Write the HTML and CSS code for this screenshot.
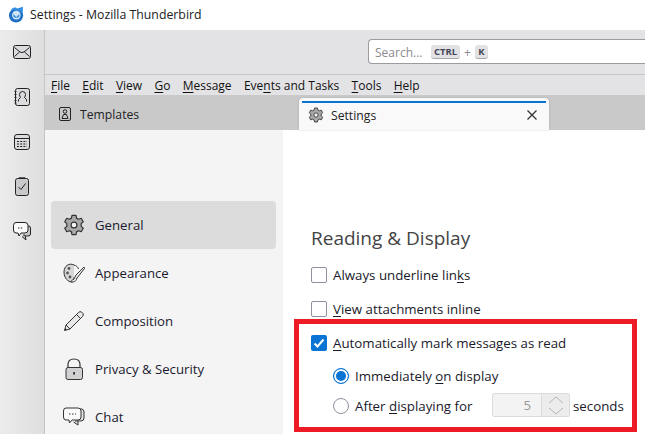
FILE: index.html
```html
<!DOCTYPE html>
<html lang="en">
<head>
    <meta charset="UTF-8">
    <title>Settings - Mozilla Thunderbird</title>
    <link rel="stylesheet" href="styles.css">
</head>
<body>
    <header class="title-bar">
        <svg class="app-logo" viewBox="0 0 18 18" width="17" height="17">
            <circle cx="8.5" cy="10" r="7.5" fill="#1f6fc4"/>
            <path d="M3 5 C4 2 7 1 9 2 C8 2.5 8 3 8.5 3.4 C11 2.2 14 1.6 15.5 0.6 C16 3 16 6 15 8 C13 5 8 4 3 5Z" fill="#2f8fe0"/>
            <circle cx="8.8" cy="9.6" r="4.6" fill="#cfe4f7"/>
            <path d="M5.6 8.6 L8.8 11.6 L12 8.6 L12 11 C11 13 6.6 13 5.6 11Z" fill="#3d8fdb"/>
        </svg>
        <span>Settings - Mozilla Thunderbird</span>
    </header>

    <div class="window">
        <aside class="spaces">
            <svg class="space-icon mail" viewBox="0 0 18 14" width="18" height="14">
                <rect x="0.5" y="0.5" width="17" height="13" rx="2" fill="#dcdcde" stroke="#222"/>
                <path d="M1.5 2.5 L7 7 Q9 8 11 7 L16.5 2.5 M1.5 11.5 L6.5 7 M16.5 11.5 L11.5 7" fill="none" stroke="#222"/>
            </svg>
            <svg class="space-icon book" viewBox="0 0 16 18" width="16" height="18">
                <rect x="1.5" y="0.5" width="14" height="17" rx="2" fill="#dcdcde" stroke="#222"/>
                <path d="M4.5 13.5 V11.5 L6.5 9.5 Q5.5 8 5.5 6.5 Q5.5 3.5 8.5 3.5 Q11.5 3.5 11.5 6.5 Q11.5 8 10.5 9.5 L12.5 11.500 V13.5 M0.5 3.5 H2.5 M0.5 6.5 H2.5 M0.5 9.5 H2.5 M0.5 12.5 H2.5 M0.5 15 H2.5" fill="none" stroke="#222"/>
            </svg>
            <svg class="space-icon calendar" viewBox="0 0 16 16" width="16" height="16">
                <rect x="0.5" y="0.5" width="15" height="15" rx="2.5" fill="#dcdcde" stroke="#222"/>
                <path d="M0.5 4.5 H15.5" stroke="#222"/>
                <path d="M3 7.5 H13 M3 10 H13 M3 12.5 H13" stroke="#222" stroke-dasharray="2 1.2"/>
            </svg>
            <svg class="space-icon tasks" viewBox="0 0 14 19" width="14" height="19">
                <rect x="0.5" y="1.5" width="13" height="17" rx="2" fill="#c9c9cb" stroke="#222"/>
                <path d="M4 2 V0.8 H10 V2" fill="none" stroke="#222"/>
                <path d="M3.5 10 L6 12.5 L10.5 6.5" fill="none" stroke="#222"/>
            </svg>
            <svg class="space-icon chat" viewBox="0 0 18 19" width="18" height="19">
                <path d="M10 13 H12 L13 18 L9 14.5" fill="#c9c9cb" stroke="#222"/>
                <path d="M13 4 H15.5 Q17.5 4 17.5 6 V12 Q17.5 14 15 14 H12" fill="#c9c9cb" stroke="#222"/>
                <path d="M3 0.5 H12 Q15 0.5 15 3.5 V8 Q15 11 12 11 H8 L6 14 L5 11 H3 Q0.5 11 0.5 8 V3.5 Q0.5 0.5 3 0.5Z" fill="#fafafa" stroke="#222"/>
                <path d="M5 6 H10.5" stroke="#222" stroke-dasharray="1.4 1.4"/>
            </svg>
        </aside>

        <div class="main">
            <div class="toolbar">
                <div class="search-box">
                    <span class="search-hint">Search...</span>
                    <kbd class="key key-ctrl">CTRL</kbd>
                    <span class="key-plus">+</span>
                    <kbd class="key key-k">K</kbd>
                </div>
            </div>

            <nav class="menu-bar">
                <span><u>F</u>ile</span>
                <span><u>E</u>dit</span>
                <span><u>V</u>iew</span>
                <span><u>G</u>o</span>
                <span><u>M</u>essage</span>
                <span>Eve<u>n</u>ts and Tasks</span>
                <span><u>T</u>ools</span>
                <span><u>H</u>elp</span>
            </nav>

            <div class="tab-bar">
                <div class="tab">
                    <svg viewBox="0 0 12 14" width="12" height="14">
                        <rect x="0.5" y="0.5" width="11" height="13" rx="1.5" fill="none" stroke="#222"/>
                        <circle cx="6" cy="4.5" r="1.8" fill="none" stroke="#222"/>
                        <path d="M3 11.5 L4.5 7.5 H7.5 L9 11.5Z" fill="none" stroke="#222"/>
                    </svg>
                    <span>Templates</span>
                </div>
                <div class="tab tab-active">
                    <svg viewBox="0 0 24 24" width="16" height="16">
                        <use href="#gear"/>
                    </svg>
                    <span>Settings</span>
                    <svg class="tab-close" viewBox="0 0 10 10" width="10" height="10">
                        <path d="M0.5 0.5 L9.5 9.5 M9.5 0.5 L0.5 9.5" stroke="#333" stroke-width="1.3"/>
                    </svg>
                </div>
            </div>

            <div class="content">
                <div class="side-nav">
                    <a class="nav-item selected">
                        <svg viewBox="0 0 24 24" width="22" height="22"><use href="#gear"/></svg>
                        General
                    </a>
                    <a class="nav-item">
                        <svg viewBox="0 0 22 22" width="22" height="22">
                            <path d="M11 3 C6 0.5 1 4 1 10 C1 16 5 20 9 20 C11 20 10.5 17 11 15.5" fill="#d6d6d8" stroke="#333"/>
                            <path d="M11 3 C13 3.5 15 5 15.5 7" fill="none" stroke="#333"/>
                            <circle cx="6" cy="6.5" r="1.4" fill="#555"/>
                            <circle cx="4.5" cy="11" r="1.4" fill="#555"/>
                            <circle cx="7" cy="15" r="1.4" fill="#555"/>
                            <path d="M21 5 L13 13 L11 17 C9 18 8.5 19 7.5 19.5 C10 20.5 13 20 14 16 L21.5 6.5Z" fill="#eee" stroke="#333"/>
                        </svg>
                        Appearance
                    </a>
                    <a class="nav-item">
                        <svg viewBox="0 0 22 22" width="22" height="22">
                            <path d="M15.5 2.5 Q17 1 18.5 2 L20 3.5 Q21 5 19.5 6.5 L7 19 L1.5 20.5 L3 15Z" fill="#e8e8e8" stroke="#333"/>
                            <path d="M13.5 4.5 L17.5 8.5 M3 15 L7 19" fill="none" stroke="#333"/>
                            <path d="M1.5 20.5 L2.2 18 L4 19.8Z" fill="#333"/>
                        </svg>
                        Composition
                    </a>
                    <a class="nav-item">
                        <svg viewBox="0 0 22 22" width="22" height="22">
                            <path d="M5 10 V6.5 Q5 1 11 1 Q17 1 17 6.5 V10" fill="none" stroke="#333" stroke-width="1.2"/>
                            <rect x="3" y="9.5" width="16.5" height="12" rx="2" fill="#d0d0d2" stroke="#333"/>
                            <rect x="10.2" y="14" width="1.8" height="2.6" fill="#333"/>
                        </svg>
                        Privacy &amp; Security
                    </a>
                    <a class="nav-item">
                        <svg viewBox="0 0 22 20" width="22" height="20">
                            <path d="M12 14 H15 L15 18 L10.5 15" fill="#e0e0e2" stroke="#333"/>
                            <path d="M17 2 H19 Q21 2.5 21 5 V11 Q21 14 18 14 H15" fill="#e0e0e2" stroke="#333"/>
                            <path d="M3 1 H15 Q18 1 18 4 V10 Q18 13 15 13 H9 L6.5 16 L6 13 H3 Q0.5 13 0.5 10 V4 Q0.5 1 3 1Z" fill="#fafafa" stroke="#333"/>
                            <path d="M6 7 H13" stroke="#333" stroke-dasharray="1.5 1.5"/>
                        </svg>
                        Chat
                    </a>
                </div>

                <section class="pane">
                    <h2>Reading &amp; Display</h2>
                    <label class="row"><span class="check"></span><span>Always underline lin<u>k</u>s</span></label>
                    <label class="row"><span class="check"></span><span><u>V</u>iew attachments inline</span></label>
                    <label class="row row-last"><span class="check checked">
                        <svg viewBox="0 0 16 16" width="16" height="16"><path d="M3.5 8.5 L6.5 11.5 L12.5 4.5" fill="none" stroke="#fff" stroke-width="2"/></svg>
                    </span><span><u>A</u>utomatically mark messages as read</span></label>
                    <div class="radio-group">
                        <label class="radio-row"><span class="radio radio-on"></span><span>Immediately <u>o</u>n display</span></label>
                        <label class="radio-row"><span class="radio"></span><span class="after-label">After <u>d</u>isplaying for</span>
                            <span class="spinner">
                                <span class="spin-value">5</span>
                                <span class="spin-btns">
                                    <svg viewBox="0 0 16 8" width="16" height="8"><path d="M1 7 L8 1 L15 7" fill="none" stroke="#b5b5b5"/></svg>
                                    <svg viewBox="0 0 16 8" width="16" height="8"><path d="M1 1 L8 7 L15 1" fill="none" stroke="#b5b5b5"/></svg>
                                </span>
                            </span>
                            <span class="seconds">seconds</span>
                        </label>
                    </div>
                </section>
            </div>
        </div>
    </div>

    <div class="highlight-box"></div>

    <svg class="defs" width="0" height="0">
        <symbol id="gear" viewBox="0 0 24 24">
            <path d="M9.8 1.5 H14.2 L14.8 4.5 L17 5.7 L19.9 4.7 L22.1 8.5 L19.8 10.5 V13.5 L22.1 15.5 L19.9 19.3 L17 18.3 L14.8 19.5 L14.2 22.5 H9.8 L9.2 19.5 L7 18.3 L4.1 19.3 L1.9 15.5 L4.2 13.5 V10.5 L1.9 8.5 L4.1 4.7 L7 5.7 L9.2 4.5Z" fill="#a8a8aa" stroke="#333" stroke-width="1.3" stroke-linejoin="round"/>
            <circle cx="12" cy="12" r="3.2" fill="#f4f4f4" stroke="#333" stroke-width="1.3"/>
        </symbol>
    </svg>
</body>
</html>
```

FILE: styles.css
```css
* {
    box-sizing: border-box;
}

html, body {
    margin: 0;
    height: 100%;
    overflow: hidden;
}

body {
    position: relative;
    font-family: "Open Sans", "Noto Sans", sans-serif;
    font-size: 13.2px;
    color: #1a1a2a;
    background: #fff;
}

u {
    text-underline-offset: 2px;
}

.defs {
    position: absolute;
}

/* title bar */
.title-bar {
    height: 30px;
    display: flex;
    align-items: center;
    gap: 5px;
    padding: 0 0 2px 8px;
    font-size: 12.3px;
    background: #fff;
    color: #222;
}

.window {
    display: flex;
    height: 404px;
}

/* left icon strip */
.spaces {
    width: 45px;
    flex: none;
    display: flex;
    flex-direction: column;
    align-items: center;
    padding-top: 15px;
    background: linear-gradient(90deg, #ececec, #dedede);
    border-right: 1px solid #c4c4c6;
}

.space-icon {
    display: block;
}

.mail { margin-bottom: 29px; }
.book { margin-bottom: 28px; }
.calendar { margin-bottom: 27px; }
.tasks { margin-bottom: 26px; }

.main {
    flex: 1;
    min-width: 0;
    display: flex;
    flex-direction: column;
}

/* search toolbar */
.toolbar {
    height: 45px;
    flex: none;
    display: flex;
    align-items: flex-start;
    padding: 9px 0 0 323px;
    background: #e3e3e5;
    border-bottom: 1px solid #c8c8ca;
}

.search-box {
    flex: 1;
    height: 25px;
    display: flex;
    align-items: center;
    padding: 1px 0 0 6px;
    font-size: 12px;
    background: #fff;
    border: 1px solid #9b9ba0;
    border-right: none;
    border-radius: 4px 0 0 4px;
    color: #8a8a90;
}

.search-hint {
    width: 56px;
}

.key {
    height: 14px;
    padding: 0 4px;
    font-family: "Open Sans", sans-serif;
    font-size: 9.5px;
    font-weight: 700;
    line-height: 13px;
    color: #45455a;
    background: #e2e2e4;
    border-bottom: 1px solid #a8a8ac;
    border-radius: 3px;
}

.key-ctrl {
    width: 29px;
    padding: 0;
    text-align: center;
}

.key-k {
    width: 13px;
    padding: 0;
    text-align: center;
}

.key-plus {
    width: 15px;
    text-align: center;
}

/* menu */
.menu-bar {
    height: 20px;
    flex: none;
    display: flex;
    align-items: center;
    gap: 12.3px;
    padding-left: 6px;
    font-size: 12px;
    background: #e3e3e5;
    color: #111;
}

/* tabs */
.tab-bar {
    height: 35px;
    flex: none;
    display: flex;
    align-items: flex-end;
    padding-left: 14px;
    font-size: 12.2px;
    background: #c9c9ca;
}

.tab {
    width: 240px;
    height: 32px;
    display: flex;
    align-items: center;
    gap: 9px;
    color: #222;
}

.tab-active {
    width: 250px;
    gap: 7px;
    padding: 2px 12px 0 9px;
    background: #f9f9fa;
    border-radius: 4px 4px 0 0;
    box-shadow: 0 0 2px rgba(0, 0, 0, 0.2);
    position: relative;
}

.tab-active::before {
    content: '';
    position: absolute;
    top: 3px;
    left: 3px;
    right: 3px;
    height: 2px;
    background: #0a74d4;
}

.tab-close {
    margin-left: auto;
}

/* settings page */
.content {
    flex: 1;
    display: flex;
    min-height: 0;
}

.side-nav {
    width: 238px;
    flex: none;
    padding: 71px 7px 0 6px;
    background: #f4f4f4;
}

.nav-item {
    height: 48px;
    display: flex;
    align-items: center;
    gap: 10px;
    padding-left: 12px;
    border-radius: 4px;
    color: #1a1a2e;
}

.nav-item.selected {
    background: #dcdcdc;
}

.nav-item svg {
    flex: none;
    width: 22px;
}

.pane {
    flex: 1;
    padding: 95px 0 0 28px;
    font-size: 13.3px;
    background: #fff;
}

.pane h2 {
    margin: 0 0 16px;
    height: 26px;
    font-size: 19px;
    font-weight: 400;
    line-height: 26px;
    color: #444;
}

.row {
    height: 34px;
    display: flex;
    align-items: flex-start;
    gap: 6px;
    line-height: 16px;
}

.row-last {
    height: 33px;
}

.check {
    width: 16px;
    height: 16px;
    flex: none;
    background: #fff;
    border: 1px solid #8f8f9d;
    border-radius: 2px;
}

.check.checked {
    background: #0a74d4;
    border: none;
    border-radius: 2px;
}

.check svg {
    display: block;
}

.radio-group {
    padding-left: 22px;
}

.radio-row {
    height: 30px;
    display: flex;
    align-items: flex-start;
    gap: 6px;
    line-height: 16px;
}

.radio {
    width: 16px;
    height: 16px;
    flex: none;
    border: 1px solid #8f8f9d;
    border-radius: 50%;
    background: #fff;
}

.radio-on {
    border: 1px solid #0a74d4;
    background: #0a74d4;
    box-shadow: inset 0 0 0 2px #fff;
}

.after-label {
    width: 131px;
    flex: none;
}

.spinner {
    width: 78px;
    height: 24px;
    flex: none;
    display: flex;
    margin: -5px 0 0 0;
    background: #f3f3f3;
    border: 1px solid #dcdcdc;
    border-radius: 2px;
    color: #999;
}

.spin-value {
    flex: 1;
    padding-right: 10px;
    text-align: right;
    line-height: 22px;
}

.spin-btns {
    width: 28px;
    display: flex;
    flex-direction: column;
    align-items: center;
    justify-content: center;
    gap: 3px;
    background: #ececec;
    border-left: 1px solid #dcdcdc;
}

.spin-btns svg {
    display: block;
}

.seconds {
    margin-left: -3px;
    white-space: nowrap;
}

/* red annotation on top of the page */
.highlight-box {
    position: absolute;
    left: 294px;
    top: 319px;
    width: 343px;
    height: 113px;
    border: 5px solid #ed1c24;
}
```
